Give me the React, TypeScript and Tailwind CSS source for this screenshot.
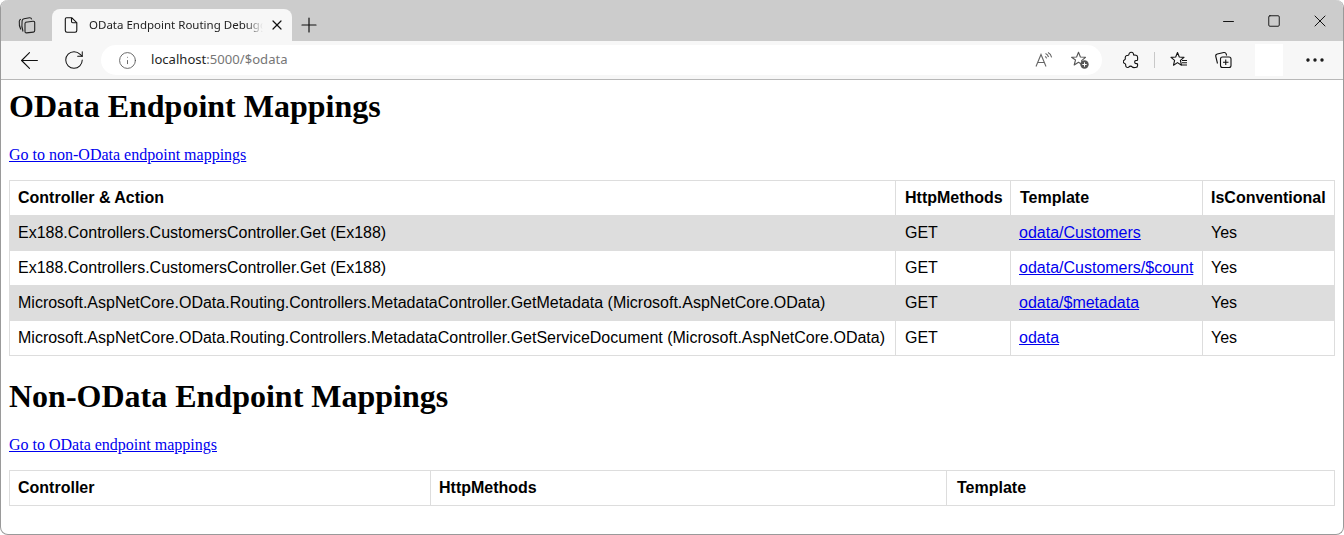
import { ArrowLeft, Info, Minus, MoreHorizontal, Plus, RotateCw, Square, X } from 'lucide-react';

const mappings = [
  { action: 'Ex188.Controllers.CustomersController.Get (Ex188)', template: 'odata/Customers' },
  { action: 'Ex188.Controllers.CustomersController.Get (Ex188)', template: 'odata/Customers/$count' },
  {
    action: 'Microsoft.AspNetCore.OData.Routing.Controllers.MetadataController.GetMetadata (Microsoft.AspNetCore.OData)',
    template: 'odata/$metadata',
  },
  {
    action: 'Microsoft.AspNetCore.OData.Routing.Controllers.MetadataController.GetServiceDocument (Microsoft.AspNetCore.OData)',
    template: 'odata',
  },
];

function TabsIcon() {
  return (
    <svg width="18" height="18" viewBox="0 0 18 18" fill="none" stroke="#222" strokeWidth="1.1">
      <path d="M7.500 6.200 15 5.200c1-.1 1.700.4 1.700 1.400v8c0 .9-.5 1.400-1.300 1.500l-6.900.8c-1 .1-1.500-.4-1.500-1.300V7.500c0-.7.500-1.200 1.500-1.300z" />
      <path d="M5 15.500C3.800 12.500 3.600 8.500 4.100 4.800 4.300 3.700 5 3 6 2.800l5.500-1c1.100-.1 1.900.4 2.200 1.600" />
      <path d="M2.800 13.500C1.400 11 1 8 1.300 5.300 1.400 4.200 2 3.500 3 3.300" />
    </svg>
  );
}

function PageIcon() {
  return (
    <svg width="14" height="16" viewBox="0 0 14 16" fill="none" stroke="#111" strokeWidth="1.1">
      <path d="M2.500 .8h5.300L12.800 5.700V13.500a1.700 1.700 0 0 1-1.700 1.700H3a1.700 1.700 0 0 1-1.700-1.700V2A1.200 1.200 0 0 1 2.500 .8z" />
      <path d="M7.500 1v3.500a1.200 1.200 0 0 0 1.200 1.200h3.800" />
    </svg>
  );
}

function ReadAloudIcon() {
  return (
    <svg width="18" height="16" viewBox="0 0 18 16" fill="none" stroke="#666" strokeWidth="1.1">
      <path d="M1 14.500 6 2.500l5 12M2.800 10.500h6.400" />
      <path d="M10.500 1.500c1.600.6 2.600 1.800 3 3.500M10 4.500c.8.3 1.300.9 1.600 1.800M13 .5c1.900.9 3.200 2.600 3.600 4.800" />
    </svg>
  );
}

function StarAddIcon() {
  return (
    <svg width="20" height="20" viewBox="0 0 20 20" fill="none">
      <path
        d="M8.500 2.200 10.400 7l5.100.3-3.900 3.300 1.200 4.400-4.300-2.700-4.300 2.700 1.300-5-3.900-2.800L6.600 7z"
        stroke="#555"
        strokeWidth="1.1"
        strokeLinejoin="round"
      />
      <circle cx="14.500" cy="14.500" r="4.200" fill="#555" />
      <path d="M14.500 12.300v4.400M12.300 14.500h4.400" stroke="#fff" strokeWidth="1" />
    </svg>
  );
}

function ExtensionIcon() {
  return (
    <svg width="16" height="18" viewBox="0 0 16 18" fill="none" stroke="#111" strokeWidth="1.1">
      <path d="M6 3.200C6 1.600 8 .8 9.500 1.600c1 .5 1 1.400 1.100 2.300l2.400.3c1.200.2 1.600 1 1.600 2v2.200c0 .9-.4 1.200-1.200 1.100-1-.1-1.700.3-1.700 1.500s.7 1.700 1.700 1.600c.8-.1 1.200.2 1.200 1.100v.7c0 1.200-.7 2-2 2.100-1.500.1-2.800.4-3.400-.6-.6-1.100-2.600-1.100-3.200 0-.5.8-1.400.6-2.200.4-1-.3-1.200-1.100-1.100-2.200.1-.8-.3-1.200-1-1.500C-.1 11.900-.1 9.600 1.400 8.900c.7-.3 1-.7.9-1.500-.2-1.300.1-2.500 1.400-2.900.8-.2 2.300.2 2.300-1.300z" />
    </svg>
  );
}

function FavoritesIcon() {
  return (
    <svg width="18" height="18" viewBox="0 0 18 18" fill="none" stroke="#111" strokeWidth="1.1">
      <path
        d="M7.500 1.500 9.300 6l4.700.4-3.600 3 1.100 4.800-4-2.600-4 2.600 1.100-4.800L1 6.400 5.700 6z"
        strokeLinejoin="round"
      />
      <path d="M12 9.500h5M12 11.800h5M12 14h5" />
    </svg>
  );
}

function CollectionsIcon() {
  return (
    <svg width="18" height="18" viewBox="0 0 18 18" fill="none" stroke="#111" strokeWidth="1.1">
      <path d="M3.500 12.500 1.800 5.500C1.500 4.200 2.100 3.300 3.300 3l6.500-1.500c1.200-.2 2 .3 2.400 1.400l.4 1.600" />
      <rect x="6.500" y="6" width="10.500" height="10.500" rx="2" />
      <path d="M11.750 8.500v5.500M9 11.250h5.500" />
    </svg>
  );
}

function BrowserChrome() {
  return (
    <div className="font-['Noto_Sans',sans-serif]">
      <div className="flex h-[41px] items-end bg-[#cccccc] pl-[17px]">
        <div className="mb-[7px] flex h-[18px] w-[34px] items-center">
          <TabsIcon />
        </div>
        <div className="flex h-[32px] w-[240px] items-center rounded-t-lg bg-[#f7f7f7] pl-[12px]">
          <PageIcon />
          <span className="ml-[11px] w-[174px] overflow-hidden text-[11.5px] whitespace-nowrap text-[#222] [mask-image:linear-gradient(to_right,black_90%,transparent)]">
            OData Endpoint Routing Debugger
          </span>
          <X className="ml-[6px] text-[#111]" size={16} strokeWidth={1.8} />
        </div>
        <div className="mb-[4px] ml-[5px] flex h-[24px] w-[24px] items-center justify-center">
          <Plus size={24} strokeWidth={1.2} className="text-[#111]" />
        </div>
        <div className="mb-[11px] ml-auto flex items-center text-[#111]">
          <div className="flex h-[18px] w-[46px] items-center justify-center">
            <Minus size={17} strokeWidth={1.4} />
          </div>
          <div className="flex h-[18px] w-[46px] items-center justify-center">
            <Square size={14} strokeWidth={1.6} />
          </div>
          <div className="flex h-[18px] w-[46px] items-center justify-center">
            <X size={20} strokeWidth={1.2} />
          </div>
        </div>
      </div>
      <div className="flex h-[39px] items-center border-b border-[#b8b8b8] bg-[#f7f7f7]">
        <div className="flex w-[56px] items-center justify-center">
          <ArrowLeft className="text-[#111]" size={27} strokeWidth={1} />
        </div>
        <div className="flex w-[33px] items-center justify-center">
          <RotateCw className="text-[#111]" size={22} strokeWidth={1.1} />
        </div>
        <div className="ml-[11px] flex h-[30px] w-[1001px] items-center rounded-full bg-white pl-[17px] pr-[12px]">
          <Info size={19} strokeWidth={1.1} className="text-[#555]" />
          <span className="ml-[14px] text-[13.1px] text-[#1f1f1f]">
            localhost<span className="text-[#767676]">:5000/$odata</span>
          </span>
          <div className="ml-auto flex items-center gap-[17px]">
            <ReadAloudIcon />
            <StarAddIcon />
          </div>
        </div>
        <div className="ml-[21px] flex h-[18px] w-[16px] items-center">
          <ExtensionIcon />
        </div>
        <div className="ml-[15px] h-[16px] w-px bg-[#c8c8c8]" />
        <div className="ml-[15px]">
          <FavoritesIcon />
        </div>
        <div className="ml-[26px]">
          <CollectionsIcon />
        </div>
        <div className="ml-[23px] h-[32px] w-[28px] bg-white" />
        <MoreHorizontal className="ml-[20px] text-[#111]" size={24} strokeWidth={1.4} />
      </div>
    </div>
  );
}

export default function App() {
  return (
    <div className="relative h-[535px] w-[1344px] overflow-hidden rounded-lg border-x border-b border-[#9a9a9a] bg-white font-['Liberation_Serif',serif] text-black">
      <BrowserChrome />
      <div className="pl-[8px] pr-[8px] pt-[8px]">
        <h1 className="text-[32px] leading-[37px] font-bold">OData Endpoint Mappings</h1>
        <p className="mt-[21px] text-[16px] leading-[18px]">
          <a href="#nonodata" className="text-[#0000ee] underline">Go to non-OData endpoint mappings</a>
        </p>
        <table className="mt-[16px] w-[1325px] table-fixed border-collapse font-['Liberation_Sans',sans-serif] text-[16px] leading-[18px]">
          <colgroup>
            <col className="w-[886px]" />
            <col className="w-[115px]" />
            <col className="w-[192px]" />
            <col className="w-[132px]" />
          </colgroup>
          <thead>
            <tr className="h-[35px]">
              <th className="border border-[#dddddd] px-[8px] text-left font-bold">Controller &amp; Action</th>
              <th className="border border-[#dddddd] pl-[9px] text-left font-bold">HttpMethods</th>
              <th className="border border-[#dddddd] pl-[9px] text-left font-bold">Template</th>
              <th className="border border-[#dddddd] pl-[8px] text-left font-bold">IsConventional</th>
            </tr>
          </thead>
          <tbody>
            {mappings.map((row, i) => (
              <tr key={row.template} className={i % 2 === 0 ? 'h-[35px] bg-[#dddddd]' : 'h-[35px]'}>
                <td className="border border-[#dddddd] px-[8px] whitespace-nowrap">{row.action}</td>
                <td className="border border-[#dddddd] pl-[9px]">GET</td>
                <td className="border border-[#dddddd] pl-[8px]">
                  <a href="#template" className="text-[#0000ee] underline">{row.template}</a>
                </td>
                <td className="border border-[#dddddd] pl-[8px]">Yes</td>
              </tr>
            ))}
          </tbody>
        </table>
        <h1 id="nonodata" className="mt-[22px] text-[32px] leading-[37px] font-bold">Non-OData Endpoint Mappings</h1>
        <p className="mt-[21px] text-[16px] leading-[18px]">
          <a href="#odata" className="text-[#0000ee] underline">Go to OData endpoint mappings</a>
        </p>
        <table className="mt-[16px] w-[1325px] table-fixed border-collapse font-['Liberation_Sans',sans-serif] text-[16px] leading-[18px]">
          <colgroup>
            <col className="w-[421px]" />
            <col className="w-[516px]" />
            <col className="w-[388px]" />
          </colgroup>
          <thead>
            <tr className="h-[35px]">
              <th className="border border-[#dddddd] px-[8px] text-left font-bold">Controller</th>
              <th className="border border-[#dddddd] px-[8px] text-left font-bold">HttpMethods</th>
              <th className="border border-[#dddddd] pl-[10px] text-left font-bold">Template</th>
            </tr>
          </thead>
        </table>
      </div>
    </div>
  );
}
